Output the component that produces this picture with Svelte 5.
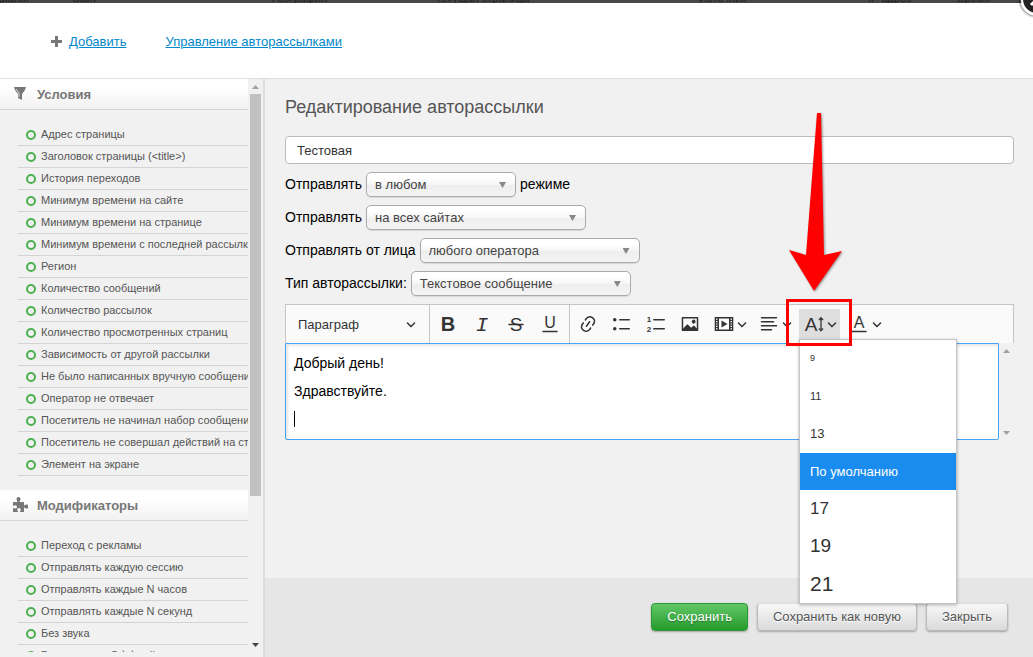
<script lang="ts">
  const columns = [
    { name: "Диалог", left: -6 },
    { name: "Сайт", left: 72 },
    { name: "География", left: 272 },
    { name: "Текущая страница", left: 435 },
    { name: "Источник", left: 699 },
    { name: "IP адрес", left: 868 },
    { name: "Время", left: 957 },
  ];

  const conditions = [
    "Адрес страницы",
    "Заголовок страницы (<title>)",
    "История переходов",
    "Минимум времени на сайте",
    "Минимум времени на странице",
    "Минимум времени с последней рассылки",
    "Регион",
    "Количество сообщений",
    "Количество рассылок",
    "Количество просмотренных страниц",
    "Зависимость от другой рассылки",
    "Не было написанных вручную сообщений",
    "Оператор не отвечает",
    "Посетитель не начинал набор сообщения",
    "Посетитель не совершал действий на странице",
    "Элемент на экране",
  ];

  const modifiers = [
    "Переход с рекламы",
    "Отправлять каждую сессию",
    "Отправлять каждые N часов",
    "Отправлять каждые N секунд",
    "Без звука",
    "Выключить в Оффлайн",
  ];

  const sizes = [
    { label: "9", px: 9 },
    { label: "11", px: 11 },
    { label: "13", px: 13 },
    { label: "По умолчанию", px: 13 },
    { label: "17", px: 17 },
    { label: "19", px: 19 },
    { label: "21", px: 21 },
  ];

  let name = $state("Тестовая");
  let selected = $state("По умолчанию");
  let open = $state(true);
</script>

{#snippet chevron()}
  <svg class="chevron" viewBox="0 0 10 10">
    <path
      d="M.941 4.523a.75.75 0 1 1 1.06-1.06l3.006 3.005 3.005-3.005a.75.75 0 1 1 1.06 1.06l-3.549 3.55a.75.75 0 0 1-1.168-.136L.941 4.523z"
    />
  </svg>
{/snippet}

{#snippet rules(items: string[])}
  <ul class="rules">
    {#each items as item}
      <li><span class="ring"></span><span class="text">{item}</span></li>
    {/each}
  </ul>
{/snippet}

<div class="page">
  <div class="backdrop">
    {#each columns as column}
      <span style="left: {column.left}px">{column.name}</span>
    {/each}
  </div>

  <button class="close" aria-label="Закрыть окно">
    <svg viewBox="0 0 34 34">
      <circle cx="17" cy="17" r="15" fill="#222" stroke="#fff" stroke-width="2" />
      <path d="M11 11l12 12M23 11L11 23" stroke="#fff" stroke-width="3" />
    </svg>
  </button>

  <header>
    <svg class="plus" viewBox="0 0 11 11">
      <path d="M4 0h3v4h4v3H7v4H4V7H0V4h4z" fill="#777" />
    </svg>
    <a href="#add">Добавить</a>
    <a class="manage" href="#manage">Управление авторассылками</a>
  </header>

  <div class="body">
    <aside>
      <div class="scroll">
        <h2>
          <svg viewBox="0 0 16 16">
            <path d="M2 1h12l-1 3-3 4v6l-4-2V8L3 4z" fill="#777" />
            <path d="M4 3l3 4v4" stroke="#ddd" fill="none" />
          </svg>
          Условия
        </h2>
        {@render rules(conditions)}
        <h2>
          <svg viewBox="0 0 16 16">
            <path
              d="M1 5h4.500C5 3.500 4.500 3 4.500 2a2 2 0 0 1 4 0c0 1-.5 1.500-1 3H12v3.500c1-.3 1.500-1 2.500-1a2 2 0 0 1 0 4c-1 0-1.500-.7-2.500-1V15H8c0-1 .8-1.300.8-2.200a1.800 1.800 0 0 0-3.600 0c0 .9.800 1.200.8 2.200H1v-4c1 .2 1.500.6 2.300.6a1.700 1.700 0 0 0 0-3.400C2.500 8.200 2 8.700 1 9z"
              fill="#777"
            />
          </svg>
          Модификаторы
        </h2>
        {@render rules(modifiers)}
      </div>
      <div class="bar">
        <i class="up"></i>
        <div class="track"><div class="thumb"></div></div>
        <i class="down dark"></i>
      </div>
    </aside>

    <main>
      <form>
        <h1>Редактирование авторассылки</h1>
        <input class="name" type="text" aria-label="Название" bind:value={name} />
        <div class="row">
          <label for="mode">Отправлять</label>
          <span class="select short">
            <select id="mode"><option>в любом</option></select>
          </span>
          <label for="mode">режиме</label>
        </div>
        <div class="row">
          <label for="sites">Отправлять</label>
          <span class="select">
            <select id="sites"><option>на всех сайтах</option></select>
          </span>
        </div>
        <div class="row">
          <label for="sender">Отправлять от лица</label>
          <span class="select">
            <select id="sender"><option>любого оператора</option></select>
          </span>
        </div>
        <div class="row">
          <label for="kind">Тип авторассылки:</label>
          <span class="select">
            <select id="kind"><option>Текстовое сообщение</option></select>
          </span>
        </div>

        <div class="toolbar">
          <button type="button" class="heading">Параграф {@render chevron()}</button>
          <div class="group">
            <button type="button" aria-label="Жирный">
              <svg viewBox="0 0 20 20"><text class="bold" x="10" y="17">B</text></svg>
            </button>
            <button type="button" aria-label="Курсив">
              <svg viewBox="0 0 20 20"><text class="italic" x="10" y="17">I</text></svg>
            </button>
            <button type="button" aria-label="Зачёркнутый">
              <svg viewBox="0 0 20 20">
                <text x="10" y="17">S</text>
                <path class="line" d="M3 10.500h14" />
              </svg>
            </button>
            <button type="button" aria-label="Подчёркнутый">
              <svg viewBox="0 0 20 20">
                <text class="under" x="10" y="14">U</text>
                <path class="line" d="M3 17.500h14" />
              </svg>
            </button>
          </div>
          <div class="group">
            <button type="button" aria-label="Ссылка">
              <svg viewBox="0 0 20 20">
                <path
                  d="m11.077 15 .991-1.416a.75.75 0 1 1 1.229.86l-1.148 1.64a.748.748 0 0 1-.217.206 5.251 5.251 0 0 1-8.503-5.955.741.741 0 0 1 .12-.274l1.147-1.639a.75.75 0 1 1 1.228.86L4.933 10.700l.006.003a3.750 3.750 0 0 0 6.132 4.294l.006.004zm5.494-5.335a.748.748 0 0 1-.12.274l-1.147 1.639a.75.75 0 1 1-1.228-.86l.86-1.230a3.750 3.750 0 0 0-6.144-4.301l-.86 1.229a.75.75 0 0 1-1.229-.86l1.148-1.640a.748.748 0 0 1 .217-.206 5.251 5.251 0 0 1 8.503 5.955zm-4.563-2.532a.75.75 0 0 1 .184 1.045l-3.155 4.505a.75.75 0 1 1-1.229-.86l3.155-4.506a.75.75 0 0 1 1.045-.184z"
                />
              </svg>
            </button>
            <button type="button" aria-label="Маркированный список">
              <svg viewBox="0 0 20 20">
                <circle cx="2.750" cy="5.750" r="1.750" />
                <circle cx="2.750" cy="14.750" r="1.750" />
                <path class="line" d="M7.750 5.750h9.500M7.750 14.750h9.500" />
              </svg>
            </button>
            <button type="button" aria-label="Нумерованный список">
              <svg viewBox="0 0 20 20">
                <text class="digit" x="3" y="8">1</text>
                <text class="digit" x="3" y="18">2</text>
                <path class="line" d="M7.750 5.750h10.500M7.750 14.750h10.500" />
              </svg>
            </button>
            <button type="button" aria-label="Изображение">
              <svg viewBox="0 0 20 20">
                <path
                  d="M6.910 10.540c.26-.23.64-.21.88.03l3.360 3.140 2.230-2.060a.64.64 0 0 1 .87 0l2.520 2.970V4.500H3.200v10.120l3.710-4.080zm10.270-7.510c.6 0 1.090.47 1.090 1.050v11.840c0 .59-.49 1.060-1.090 1.060H2.790c-.6 0-1.090-.47-1.090-1.060V4.080c0-.58.49-1.050 1.100-1.050h14.380zm-5.220 5.560a1.960 1.960 0 1 1 3.400-1.960 1.960 1.960 0 0 1-3.400 1.960z"
                />
              </svg>
            </button>
            <button type="button" class="wide" aria-label="Видео">
              <svg viewBox="0 0 20 20">
                <path
                  fill-rule="evenodd"
                  d="M.7 3h18.600v14H.7zM5 4.500v11h10v-11zM2 4.500v1.200h1.500V4.500zm0 2.500v1.200h1.500V7zm0 2.400v1.200h1.500V9.400zm0 2.400V13h1.500v-1.200zm0 2.500v1.200h1.500v-1.200zM16.500 4.500v1.200H18V4.500zm0 2.500v1.200H18V7zm0 2.400v1.200H18V9.400zm0 2.400V13H18v-1.200zm0 2.500v1.200H18v-1.200zM7.500 6.500v7l6-3.500z"
                />
              </svg>
              {@render chevron()}
            </button>
            <button type="button" class="wide" aria-label="Выравнивание">
              <svg viewBox="0 0 20 20">
                <path class="line" d="M2.500 3.750h15M2.500 7.750h12M2.500 11.750h15M2.500 15.750h10" />
              </svg>
              {@render chevron()}
            </button>
            <div class="size">
              <button
                type="button"
                class="wide"
                class:on={open}
                aria-label="Размер шрифта"
                onclick={() => (open = !open)}
              >
                <svg viewBox="0 0 20 20">
                  <text x="7" y="17">A</text>
                  <path
                    d="M17 5v10M15 6l2-2.200L19 6M15 14.500l2 2.200 2-2.200"
                    fill="none"
                    stroke="#333"
                    stroke-width="1.300"
                  />
                </svg>
                {@render chevron()}
              </button>
              {#if open}
                <div class="menu">
                  {#each sizes as size}
                    <button
                      type="button"
                      class:selected={size.label === selected}
                      style="font-size: {size.px}px"
                      onclick={() => (selected = size.label)}
                    >
                      {size.label}
                    </button>
                  {/each}
                </div>
              {/if}
              <div class="frame"></div>
              <svg class="arrow" viewBox="0 0 54 180">
                <path d="M28 1h4l3 142 18-4-28 40L0 138l17 5z" fill="#f00" />
              </svg>
            </div>
            <button type="button" class="wide" aria-label="Цвет шрифта">
              <svg viewBox="0 0 20 20">
                <text class="under" x="10" y="14">A</text>
                <path class="line" d="M3 17.500h14" />
              </svg>
              {@render chevron()}
            </button>
          </div>
        </div>
        <div class="editor">
          <div class="content">
            <p>Добрый день!</p>
            <p>Здравствуйте.</p>
            <p class="current"><span class="caret"></span></p>
          </div>
          <div class="bar">
            <i class="up"></i>
            <div class="track"></div>
            <i class="down"></i>
          </div>
        </div>
      </form>
      <footer>
        <button class="save">Сохранить</button>
        <button>Сохранить как новую</button>
        <button>Закрыть</button>
      </footer>
    </main>
  </div>
</div>

<style>
  :global(body) {
    margin: 0;
  }
  .page {
    position: relative;
    display: flex;
    flex-direction: column;
    height: 100vh;
    overflow: hidden;
    background: #fff;
    color: #000;
    font-family: "Liberation Sans", Arial, sans-serif;
    font-size: 14px;
  }
  .page * {
    box-sizing: border-box;
  }
  button,
  input,
  select {
    margin: 0;
    font-family: inherit;
  }
  .backdrop {
    position: relative;
    flex: none;
    height: 3px;
    overflow: hidden;
    background: #474747;
    color: #222;
    font-size: 11px;
    line-height: 10px;
  }
  .backdrop span {
    position: absolute;
    bottom: 0;
    white-space: nowrap;
  }
  .close {
    position: absolute;
    top: -18px;
    right: -21px;
    width: 34px;
    height: 34px;
    padding: 0;
    border: 0;
    border-radius: 50%;
    background: none;
    box-shadow: 0 0 3px #000;
  }
  .close svg {
    display: block;
  }
  header {
    display: flex;
    flex: none;
    align-items: center;
    height: 76px;
    padding: 2px 0 0 51px;
    border-bottom: 1px solid #ddd;
    font-size: 13px;
  }
  .plus {
    width: 11px;
    margin-right: 7px;
  }
  a {
    color: #0088cc;
  }
  .manage {
    margin-left: 39px;
  }
  .body {
    display: flex;
    flex: 1;
    min-height: 0;
    background: #f1f1f1;
  }

  aside {
    display: flex;
    flex: none;
    width: 265px;
    padding-bottom: 5px;
    border-right: 2px solid #dcdcdc;
  }
  .scroll {
    flex: 1;
    overflow: hidden;
  }
  h2 {
    display: flex;
    align-items: center;
    gap: 9px;
    height: 31px;
    margin: 0;
    padding-left: 12px;
    border-bottom: 1px solid #d4d4d4;
    background: linear-gradient(#fff 30%, #f1f1f1);
    color: #777;
    font-size: 13px;
  }
  h2 svg {
    width: 16px;
    height: 16px;
  }
  .rules {
    margin: 0 0 0 18px;
    padding: 14px 0;
    list-style: none;
  }
  .rules li {
    display: flex;
    align-items: center;
    height: 22px;
    padding-left: 8px;
    border-bottom: 1px solid #d4d4d4;
    color: #555;
    font-size: 11px;
    white-space: nowrap;
  }
  .text {
    padding-bottom: 2px;
  }
  .ring {
    flex: none;
    width: 10px;
    height: 10px;
    margin-right: 5px;
    border: 2px solid #4cb050;
    border-radius: 50%;
  }
  .bar {
    display: flex;
    flex: none;
    flex-direction: column;
    align-items: center;
    width: 15px;
    background: #f1f1f1;
  }
  .bar i {
    width: 7px;
    height: 4px;
    margin: 6px 0 5px;
    background: #a0a0a0;
  }
  .up {
    clip-path: polygon(50% 0, 100% 100%, 0 100%);
  }
  .down {
    clip-path: polygon(0 0, 100% 0, 50% 100%);
  }
  .bar .dark {
    background: #444;
  }
  .track {
    flex: 1;
  }
  .thumb {
    width: 11px;
    height: 74%;
    background: #c1c1c1;
  }

  main {
    display: flex;
    flex: 1;
    flex-direction: column;
    min-width: 0;
  }
  form {
    flex: 1;
    padding: 17px 19px 0 20px;
  }
  h1 {
    margin: 0 0 17px;
    color: #555;
    font-size: 18px;
    font-weight: normal;
    line-height: 23px;
  }
  .name {
    display: block;
    width: 100%;
    height: 28px;
    margin-bottom: 8px;
    padding: 0 11px;
    border: 1px solid #bbb;
    border-radius: 4px;
    color: #333;
    font-size: 13px;
  }
  .row {
    display: flex;
    align-items: center;
    gap: 4px;
    height: 25px;
    margin-bottom: 8px;
  }
  .row label {
    padding-bottom: 2px;
  }
  .select {
    position: relative;
    width: 220px;
  }
  .short {
    width: 150px;
  }
  .select::after {
    content: "";
    position: absolute;
    top: 10px;
    right: 10px;
    width: 7px;
    height: 6px;
    background: #888;
    clip-path: polygon(0 0, 100% 0, 50% 100%);
    pointer-events: none;
  }
  select {
    display: block;
    width: 100%;
    height: 25px;
    padding: 0 8px;
    border: 1px solid #aaa;
    border-radius: 5px;
    appearance: none;
    background: linear-gradient(#fff 20%, #f6f6f6 50%, #eee 52%, #f4f4f4);
    box-shadow: 0 1px 1px rgba(0, 0, 0, 0.1);
    color: #444;
    font-size: 13px;
  }

  .toolbar {
    display: flex;
    height: 39px;
    border: 1px solid #c4c4c4;
    border-bottom: 0;
    background: #fafafa;
  }
  .toolbar button {
    display: flex;
    align-items: center;
    padding: 0 5px;
    border: 0;
    background: none;
    color: #333;
  }
  .toolbar svg {
    flex: none;
    width: 20px;
    height: 20px;
    fill: #333;
  }
  .toolbar .chevron {
    width: 10px;
    height: 10px;
  }
  .toolbar .heading {
    justify-content: space-between;
    width: 143px;
    padding: 0 13px 0 12px;
    font-size: 13px;
  }
  .group {
    display: flex;
    gap: 4px;
    padding: 4px 4px 4px 3px;
    border-left: 1px solid #c4c4c4;
  }
  .group button {
    width: 30px;
    height: 30px;
  }
  .group .wide {
    width: 41px;
    gap: 3px;
  }
  .group .on {
    background: #dedede;
  }
  .group text {
    font-size: 19px;
    text-anchor: middle;
  }
  .group .bold {
    font-size: 20px;
    font-weight: bold;
  }
  .group .italic {
    font-family: "Liberation Mono", monospace;
    font-size: 21px;
    font-style: italic;
  }
  .group .digit {
    font-size: 8px;
    font-weight: bold;
  }
  .group .under {
    font-size: 16px;
  }
  .line {
    fill: none;
    stroke: #333;
    stroke-width: 1.5;
    stroke-linecap: round;
  }
  .size {
    position: relative;
  }
  .menu {
    position: absolute;
    top: 30px;
    left: 0;
    z-index: 1;
    display: flex;
    flex-direction: column;
    width: 158px;
    height: 265px;
    border: 1px solid #c4c4c4;
    background: #fff;
    box-shadow: 0 1px 3px rgba(0, 0, 0, 0.3);
  }
  .menu button {
    flex: 1;
    width: 100%;
    padding: 0 10px 1px;
  }
  .menu .selected {
    background: #1a8cf0;
    color: #fff;
  }
  .frame {
    position: absolute;
    top: -10px;
    left: -13px;
    z-index: 2;
    width: 66px;
    height: 47px;
    border: 3px solid #f00;
    pointer-events: none;
  }
  .toolbar .arrow {
    position: absolute;
    bottom: 47px;
    left: -10px;
    z-index: 2;
    width: 54px;
    height: 180px;
    filter: drop-shadow(1px 1px 1px rgba(0, 0, 0, 0.4));
    pointer-events: none;
  }
  .editor {
    display: flex;
  }
  .content {
    flex: 1;
    padding: 5px 8px 6px;
    border: 1px solid #47a4f5;
    border-radius: 0 0 2px 2px;
    background: #fff;
    box-shadow: inset 2px 2px 3px rgba(0, 0, 0, 0.1);
  }
  .content p {
    height: 28px;
    margin: 0;
    line-height: 28px;
  }
  .content .current {
    display: flex;
    align-items: center;
  }
  .caret {
    width: 1px;
    height: 16px;
    background: #000;
  }

  footer {
    display: flex;
    flex: none;
    justify-content: flex-end;
    gap: 9px;
    padding: 25px 25px 26px;
    background: #e6e6e6;
  }
  footer button {
    height: 28px;
    padding: 0 15px 1px;
    border: 1px solid #bbb;
    border-top-color: #ddd;
    border-radius: 4px;
    background: linear-gradient(#f8f8f8, #dadada);
    box-shadow: 0 1px 2px rgba(0, 0, 0, 0.3);
    color: #555;
    font-size: 13px;
    text-shadow: 0 1px 0 #fff;
  }
  footer .save {
    border-color: #2a9a35;
    background: linear-gradient(#62c866, #249a2c);
    color: #fff;
    text-shadow: 0 1px 1px rgba(0, 0, 0, 0.3);
  }
</style>
